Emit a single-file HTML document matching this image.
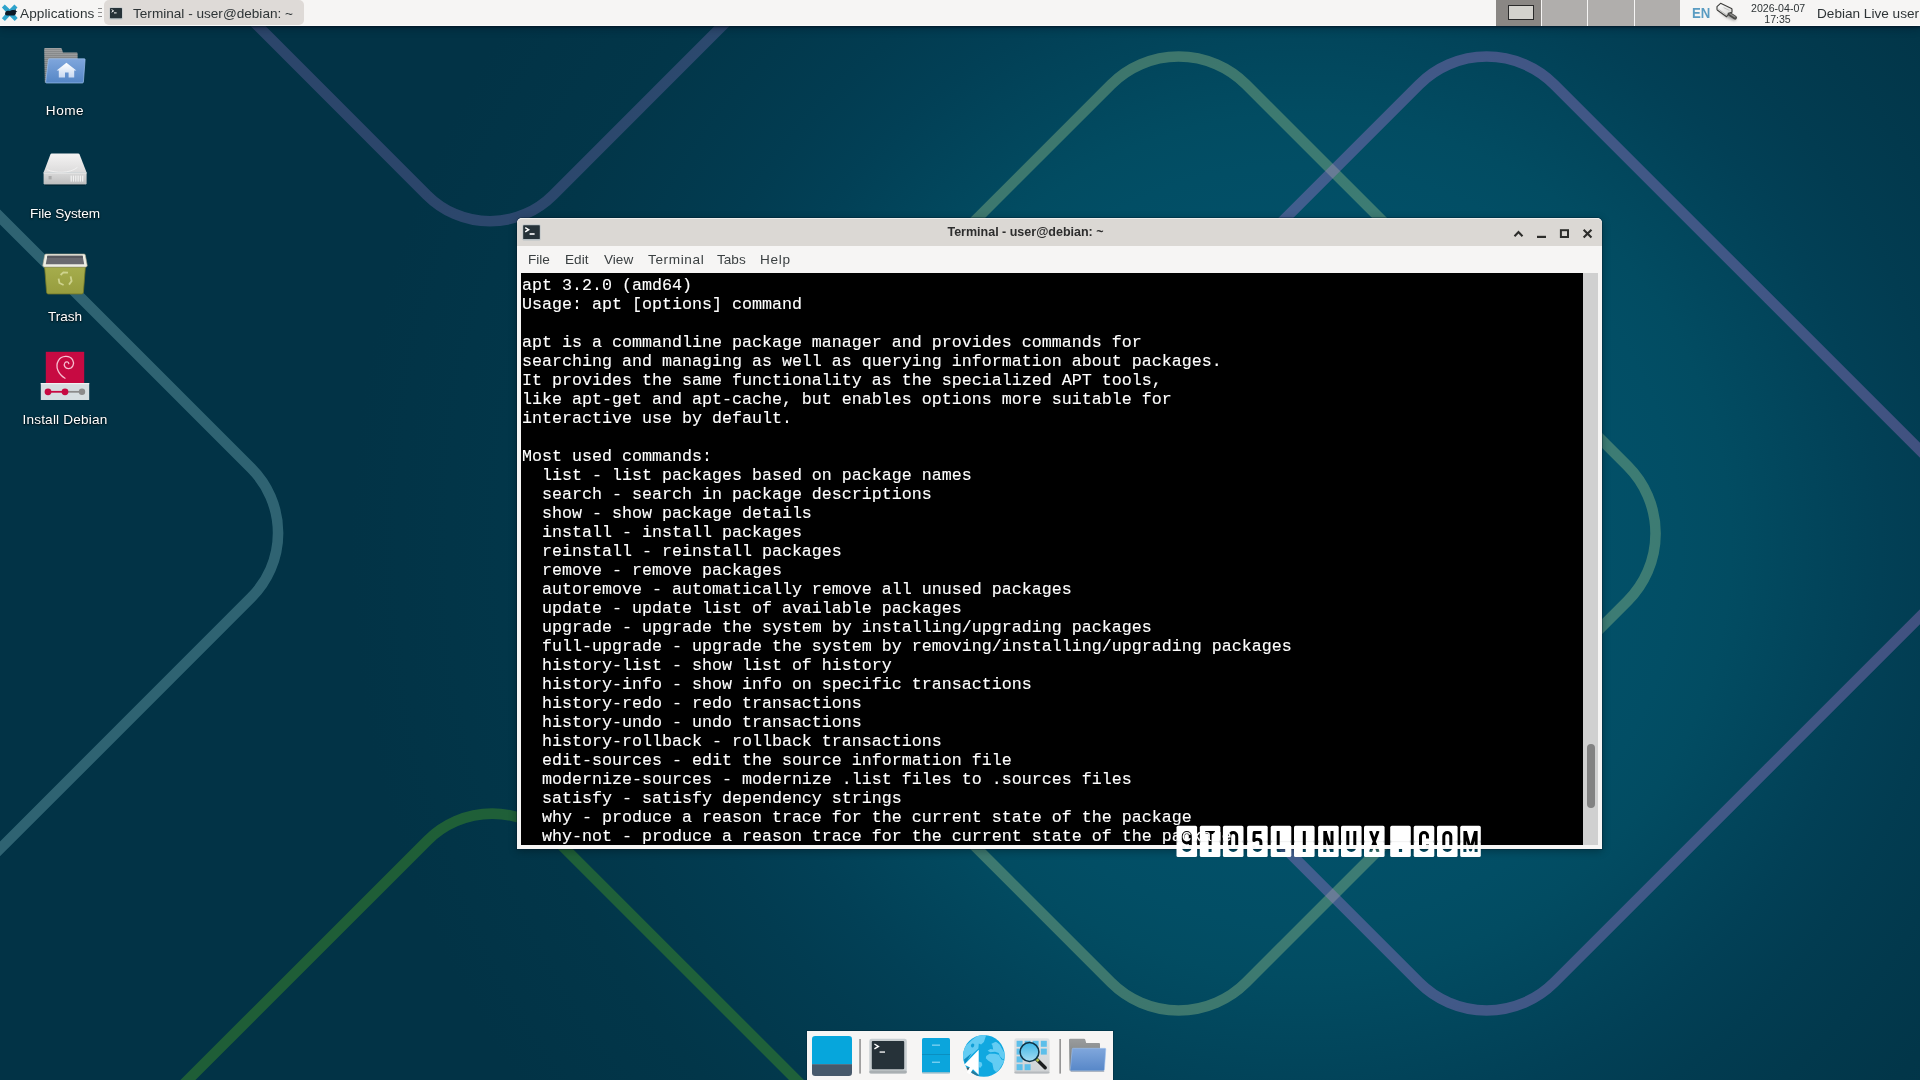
<!DOCTYPE html>
<html>
<head>
<meta charset="utf-8">
<title>Debian Live - Xfce</title>
<style>
*{box-sizing:border-box;margin:0;padding:0}
html,body{width:1920px;height:1080px;overflow:hidden}
body{position:relative;font-family:"Liberation Sans",sans-serif;background-color:#023346;
background-image:radial-gradient(circle 950px at 1300px 545px, rgb(2,82,106) 0.0%, rgb(2,80,104) 31.6%, rgb(2,78,101) 40.0%, rgb(2,76,98) 45.3%, rgb(2,72,94) 50.5%, rgb(2,68,90) 55.8%, rgb(2,64,86) 61.1%, rgb(2,60,81) 68.4%, rgb(2,57,77) 75.8%, rgb(2,54,73) 84.2%, rgb(2,51,70) 100.0%);
background-repeat:no-repeat;
}
#wall{position:absolute;left:0;top:0;width:1920px;height:1080px}
.abs{position:absolute}
#panel,.dlabel,#win,#dock,#wm{will-change:transform}

/* top panel */
#panel{position:absolute;left:0;top:0;width:1920px;height:26px;background:#f6f5f4;color:#2e3436;font-size:13.6px;border-bottom:1px solid #fbfbfb;box-shadow:0 1px 2px rgba(0,12,28,.65),0 2px 8px rgba(0,12,28,.4)}
#panel .t{position:absolute;white-space:nowrap;line-height:26px;top:.5px}
#taskbtn{position:absolute;left:104px;top:0;width:199.5px;height:25px;background:#dedad7;border-radius:5px}
.ws{position:absolute;top:0;height:26px;background:#b0aeac}

/* desktop icons */
.dlabel{position:absolute;width:160px;text-align:center;color:#fff;font-size:13.6px;line-height:16px;white-space:nowrap;text-shadow:0 1px 2px rgba(0,0,0,.8),0 0 2px rgba(0,0,0,.6)}

/* window */
#win{position:absolute;left:517px;top:218px;width:1085px;height:631px;background:#f6f5f4;border-radius:5px 5px 0 0;box-shadow:0 0 0 1px rgba(0,20,35,.3),0 2px 9px rgba(0,0,0,.32)}
#title{position:absolute;left:0;top:0;width:1085px;height:28px;background:#dbd8d4;border-radius:5px 5px 0 0;border-top:1px solid #efeeec}
#title .tt{position:absolute;left:358.5px;width:300px;top:0;text-align:center;font-weight:bold;font-size:12.5px;line-height:27px;color:#2d2d2d;white-space:nowrap}
#menu{position:absolute;left:0;top:28px;width:1085px;height:27px;background:#f6f5f4;color:#3a3f41;font-size:13.6px}
#menu span{position:absolute;top:0;line-height:27px;white-space:nowrap}
#term{position:absolute;left:4px;top:55px;width:1062px;height:572px;background:#000;overflow:hidden}
#term pre{position:absolute;left:1px;top:3px;font-family:"Liberation Mono",monospace;font-size:16.66px;line-height:19px;color:#fff;white-space:pre;-webkit-text-stroke:.12px #fff}
#sb{position:absolute;left:1066px;top:55px;width:15px;height:572px;background:#d0d0d0}
#thumb{position:absolute;left:1070px;top:526px;width:8px;height:64px;background:#828282;border-radius:4px}

/* dock */
#dock{position:absolute;left:807px;top:1031px;width:306px;height:49px;background:#f6f5f4;box-shadow:0 0 0 1px rgba(0,20,35,.25)}
</style>
</head>
<body>
<svg id="wall" viewBox="0 0 1920 1080">
 <g fill="none" stroke-width="10.6">
  <rect x="-365.2" y="-365.2" width="730.4" height="730.4" rx="91.5" transform="translate(-200.5,532.9) rotate(45)" stroke="rgba(152,211,218,.3)"/>
  <rect x="-365.2" y="-365.2" width="730.4" height="730.4" rx="89" transform="translate(490,-258.4) rotate(45)" stroke="rgba(170,128,218,.25)"/>
  <rect x="-365.2" y="-365.2" width="730.4" height="730.4" rx="91.5" transform="translate(492.2,1292.2) rotate(45)" stroke="rgba(60,137,39,.5)"/>
  <rect x="-365.2" y="-365.2" width="730.4" height="730.4" rx="95.4" transform="translate(1178.6,533.5) rotate(45)" stroke="rgba(183,215,144,.33)"/>
  <rect x="-365.2" y="-365.2" width="730.4" height="730.4" rx="95.4" transform="translate(1486.7,533.5) rotate(45)" stroke="rgba(195,124,223,.33)"/>
 </g>
</svg>

<div id="panel">
 <div id="taskbtn"></div>
 <svg class="abs" style="left:1px;top:4px" width="18" height="18" viewBox="0 0 18 18">
  <path d="M0.9 3.4 L3.8 0.6 L8.7 5.2 L13.4 0.6 L16.5 3.5 L11.8 8.6 L16.7 14 L13.7 17.1 L8.7 12.1 L3.9 17.1 L0.9 14.2 L5.7 8.7 Z" fill="#2ea3cc"/>
  <path d="M4.4 8.2 C5.2 6.9 7.2 6.6 8.8 6.9 C10.2 5.9 12.2 5.7 13.3 6.3 L14.6 5.3 L14.9 6.9 L16.3 7.6 L14.8 8.6 C15.2 9.8 14.6 11 13.2 11.4 L6.2 11.6 C4.6 11.5 3.4 10.2 4.4 8.2 Z" fill="#0c1826"/>
 </svg>
 <span class="t" style="left:20px;letter-spacing:.1px">Applications</span>
 <div class="abs" style="left:98px;top:8px;width:4px;height:1px;background:#8d8d8d;box-shadow:0 4px 0 #8d8d8d,0 8px 0 #8d8d8d"></div>
 <svg class="abs" style="left:109px;top:7px" width="14" height="13" viewBox="0 0 14 13">
  <rect x="0.5" y="0.5" width="13" height="12" rx="1" fill="#b9c2c6"/>
  <rect x="1" y="1" width="12" height="10.2" rx=".6" fill="#263238"/>
  <path d="M2.6 2.6 L4.6 3.9 L2.6 5.2" stroke="#fff" stroke-width="1" fill="none"/><rect x="5" y="5.4" width="2.6" height="1" fill="#fff"/>
 </svg>
 <span class="t" style="left:133px">Terminal - user@debian: ~</span>
 <div class="ws" style="left:1496px;width:45px;background:#8a8784"><div class="abs" style="left:12px;top:5px;width:26px;height:15px;background:#d3d2cd;border:1.5px solid #2a2a2a"></div></div>
 <div class="ws" style="left:1542px;width:45px"></div>
 <div class="ws" style="left:1588px;width:45.5px"></div>
 <div class="ws" style="left:1634.5px;width:45.5px"></div>
 <span class="t" style="left:1692px;top:-.5px;font-weight:bold;font-size:14px;color:#5a9cc2;transform:scaleX(.94);transform-origin:0 0">EN</span>
 <svg class="abs" style="left:1710px;top:0" width="35" height="26" viewBox="0 0 35 26">
  <defs><filter id="nb" x="-30%" y="-30%" width="160%" height="160%"><feGaussianBlur stdDeviation="1.4"/></filter>
  <linearGradient id="ng" x1="0" y1="0" x2="1" y2="1"><stop offset="0" stop-color="#ffffff"/><stop offset="1" stop-color="#d4d4d2"/></linearGradient></defs>
  <path d="M8 10 L16 17 L25 21 L26 18 L18 13 Z" fill="rgba(0,0,0,.38)" filter="url(#nb)"/>
  <path d="M18.6 13.4 L25 17.6" stroke="#4a4a48" stroke-width="4" stroke-linecap="round"/>
  <path d="M19.4 13.4 L25 17" stroke="#8c8c8a" stroke-width="1.3" stroke-linecap="round"/>
  <path d="M10.6 3.3 L21.5 8.5 Q22 8.8 22 9.4 L22 12.2 L18.3 13.4 L16.6 16.7 L7.5 10.2 Q7 9.8 7 9.2 L7 6.6 Z" fill="url(#ng)" stroke="#3e3e3c" stroke-width="1.15" stroke-linejoin="round"/>
  <path d="M8.2 9 L16.8 15.2 L18 12.6" fill="none" stroke="#b4b4b2" stroke-width=".9"/>
  <path d="M13.6 7.6 L19.4 10.4" stroke="#bdbdbb" stroke-width=".8"/>
 </svg>
 <span class="t" style="left:1751px;font-size:10.6px;line-height:11px;top:3px;width:53px;text-align:center">2026-04-07<br>17:35</span>
 <span class="t" style="left:1817px">Debian Live user</span>
</div>

<!-- desktop icons -->
<svg class="abs" style="left:41px;top:44px" width="48" height="44" viewBox="0 0 48 44">
 <defs>
  <linearGradient id="hfb" x1="0" y1="0" x2="0" y2="1"><stop offset="0" stop-color="#8c8e8f"/><stop offset="1" stop-color="#6f7475"/></linearGradient>
  <linearGradient id="hff" x1="0" y1="0" x2="0" y2="1"><stop offset="0" stop-color="#7fa6dc"/><stop offset="1" stop-color="#5586c6"/></linearGradient>
  <linearGradient id="hhs" x1="0" y1="0" x2="0" y2="1"><stop offset="0" stop-color="#ffffff"/><stop offset="1" stop-color="#c9d9f1"/></linearGradient>
  <pattern id="hstripe" width="4" height="2" patternUnits="userSpaceOnUse"><rect width="4" height="1" fill="rgba(255,255,255,.16)"/></pattern>
 </defs>
 <path d="M3.2 5 Q3.2 4 4.2 4 L19.6 4 Q20.6 4 20.9 5 L21.9 8.6 L35.6 8.6 Q36.6 8.6 36.6 9.6 L36.6 16 L5 38.6 L3.8 38.6 Z" fill="url(#hfb)"/>
 <path d="M3.2 5 Q3.2 4 4.2 4 L19.6 4 Q20.6 4 20.9 5 L21.9 8.6 L35.6 8.6 Q36.6 8.6 36.6 9.6 L36.6 16 L5 38.6 L3.8 38.6 Z" fill="url(#hstripe)"/>
 <path d="M8.4 14.8 L43.4 14.8 Q44.2 14.8 44.1 15.6 L42.4 38 Q42.3 39 41.3 39 L5.6 39 Q4.6 39 4.7 38 L7.4 15.7 Q7.5 14.8 8.4 14.8 Z" fill="url(#hff)" stroke="#9cc0ee" stroke-width=".7"/>
 <path d="M15.6 26.4 L25.4 18.8 L35.4 26.4 L33.2 26.4 L33.2 33.6 L27.6 33.6 L27.6 28.4 L24 28.4 L24 33.6 L17.8 33.6 L17.8 26.4 Z" fill="url(#hhs)"/>
</svg>

<svg class="abs" style="left:41px;top:148px" width="48" height="44" viewBox="0 0 48 44">
 <defs>
  <linearGradient id="dtop" x1="0" y1="0" x2="0" y2="1"><stop offset="0" stop-color="#f4f3f3"/><stop offset="1" stop-color="#dcdbdb"/></linearGradient>
  <linearGradient id="dfr" x1="0" y1="0" x2="0" y2="1"><stop offset="0" stop-color="#d9d9d9"/><stop offset="1" stop-color="#bdbdbd"/></linearGradient>
 </defs>
 <path d="M10.6 5.6 L37.2 5.6 Q38.2 5.6 38.6 6.5 L45.6 24.6 L2.6 24.6 L9.4 6.5 Q9.8 5.6 10.6 5.6 Z" fill="url(#dtop)"/>
 <path d="M6 21.6 C14 25.4 29 25.6 36.4 19.4" stroke="#f8f8f8" stroke-width=".9" fill="none" opacity=".8"/>
 <path d="M2.6 24.6 L45.6 24.6 L45.6 35.2 Q45.6 36.6 44.2 36.6 L4 36.6 Q2.6 36.6 2.6 35.2 Z" fill="url(#dfr)"/>
 <rect x="2.6" y="24.4" width="43" height="1" fill="#efefef"/>
 <rect x="7.6" y="28" width="3" height="3.4" fill="#a9a9a9"/>
 <g fill="#f2f2f2"><rect x="29.6" y="27.6" width="1.2" height="6"/><rect x="31.9" y="27.6" width="1.2" height="6"/><rect x="34.2" y="27.6" width="1.2" height="6"/><rect x="36.5" y="27.6" width="1.2" height="6"/><rect x="38.8" y="27.6" width="1.2" height="6"/><rect x="41.1" y="27.6" width="1.2" height="6"/></g>
 <rect x="4" y="36.6" width="40" height="1" fill="rgba(0,0,0,.35)"/>
</svg>

<svg class="abs" style="left:41px;top:250px" width="48" height="46" viewBox="0 0 48 46">
 <defs>
  <linearGradient id="tb" x1="0" y1="0" x2="0" y2="1"><stop offset="0" stop-color="#a6ad4c"/><stop offset="1" stop-color="#969c3e"/></linearGradient>
 </defs>
 <path d="M3.6 17 L44.4 17 L42.4 42.4 Q42.3 44 40.6 44 L7.4 44 Q5.8 44 5.6 42.4 Z" fill="url(#tb)" stroke="#6f7526" stroke-width=".8"/>
 <path d="M5 4 L43 4 Q44 4 44.3 4.9 L46.2 15.2 Q46.4 17 44.8 17 L3.2 17 Q1.6 17 1.8 15.2 L3.7 4.9 Q4 4 5 4 Z" fill="#eeeee4" stroke="#a9a58e" stroke-width=".6"/>
 <path d="M6.4 5.8 L41.6 5.8 L43.2 14.2 L4.8 14.2 Z" fill="#6a6a70"/>
 <path d="M6.4 5.8 L41.6 5.8 L42 8 L6 8 Z" fill="#58585e"/>
 <g fill="none" stroke="#d7db9a" stroke-width="1.8" opacity=".85">
  <path d="M19.6 25 L22.4 22.4 L27 22.6"/><path d="M29.6 26.4 L30.6 31 L28 34.6"/><path d="M22.6 35 L18.4 33 L17.6 28.6"/>
 </g>
</svg>

<svg class="abs" style="left:39px;top:350px" width="52" height="52" viewBox="0 0 52 52">
 <rect x="6.8" y="1.8" width="38.4" height="31.4" fill="#c70a42"/>
 <rect x="1.8" y="33" width="48.4" height="17" fill="#d6dee1"/>
 <rect x="1.8" y="33" width="48.4" height="1.2" fill="#eef2f3"/>
 <path d="M26 28.2 C19.4 24.6 15.8 16.6 19.4 10.6 C22.4 5.4 30.6 5 33.6 9.8 C36 13.8 33.4 18.6 29.4 18.6 C26.2 18.6 24.2 15.4 25.8 13 C27 11.2 29.6 11.6 29.8 13.6" fill="none" stroke="#f7bfd0" stroke-width="1.3" stroke-linecap="round"/>
 <path d="M9 41.8 L26 41.8" stroke="#c70a42" stroke-width="1.8"/><path d="M26 41.8 L43 41.8" stroke="#8b8b8b" stroke-width="1.8"/>
 <circle cx="9" cy="41.8" r="3.4" fill="#c70a42"/><circle cx="26" cy="41.8" r="3.4" fill="#c70a42"/><circle cx="43" cy="41.8" r="3.2" fill="#8b8b8b"/>
</svg>

<div class="dlabel" style="left:-15px;top:103px;letter-spacing:.5px">Home</div>
<div class="dlabel" style="left:-15px;top:206px;letter-spacing:-.1px">File System</div>
<div class="dlabel" style="left:-15px;top:309px">Trash</div>
<div class="dlabel" style="left:-15px;top:412px;letter-spacing:.2px">Install Debian</div>

<div id="win">
 <div id="title">
  <svg class="abs" style="left:5px;top:5px" width="19" height="17" viewBox="0 0 19 17">
   <rect x="0.5" y="0.5" width="18" height="16" rx="1.2" fill="#b7c0c4"/>
   <rect x="1.2" y="1.2" width="16.6" height="13.8" rx=".6" fill="#263238"/>
   <path d="M3.2 3.6 L6.6 5.7 L3.2 7.8" stroke="#fff" stroke-width="1.5" fill="none"/><rect x="7.6" y="9.2" width="5" height="1.6" fill="#fff"/>
  </svg>
  <div class="tt">Terminal - user@debian: ~</div>
  <svg class="abs" style="left:990px;top:6px" width="90" height="16" viewBox="0 0 90 16" fill="none" stroke="#2d2d2b" stroke-width="2.1">
   <path d="M7.5 11.2 L11.5 7.1 L15.5 11.2"/>
   <path d="M30 11.9 L39 11.9" stroke-width="2.2"/>
   <rect x="53.9" y="5.2" width="7.1" height="6.8" stroke-width="2"/>
   <path d="M76.65 4.7 L84.45 12.5 M84.45 4.7 L76.65 12.5"/>
  </svg>
 </div>
 <div id="menu">
  <span style="left:11px">File</span><span style="left:48px">Edit</span><span style="left:87px">View</span><span style="left:131px;letter-spacing:.62px">Terminal</span><span style="left:200px">Tabs</span><span style="left:243px;letter-spacing:.7px">Help</span>
 </div>
 <div id="term"><pre>apt 3.2.0 (amd64)
Usage: apt [options] command

apt is a commandline package manager and provides commands for
searching and managing as well as querying information about packages.
It provides the same functionality as the specialized APT tools,
like apt-get and apt-cache, but enables options more suitable for
interactive use by default.

Most used commands:
  list - list packages based on package names
  search - search in package descriptions
  show - show package details
  install - install packages
  reinstall - reinstall packages
  remove - remove packages
  autoremove - automatically remove all unused packages
  update - update list of available packages
  upgrade - upgrade the system by installing/upgrading packages
  full-upgrade - upgrade the system by removing/installing/upgrading packages
  history-list - show list of history
  history-info - show info on specific transactions
  history-redo - redo transactions
  history-undo - undo transactions
  history-rollback - rollback transactions
  edit-sources - edit the source information file
  modernize-sources - modernize .list files to .sources files
  satisfy - satisfy dependency strings
  why - produce a reason trace for the current state of the package
  why-not - produce a reason trace for the current state of the package</pre></div>
 <div id="sb"></div><div id="thumb"></div>
</div>

<div id="dock">
<svg class="abs" style="left:0;top:0" width="306" height="49" viewBox="0 0 306 49">
 <defs>
  <clipPath id="sdc"><rect x="5" y="5" width="40" height="40" rx="3.2"/></clipPath>
  <clipPath id="glc"><circle cx="176.9" cy="24.9" r="20.9"/></clipPath>
  <linearGradient id="ffr" x1="0" y1="0" x2="0" y2="1"><stop offset="0" stop-color="#80a7dc"/><stop offset="1" stop-color="#5787c8"/></linearGradient>
  <linearGradient id="fbk" x1="0" y1="0" x2="0" y2="1"><stop offset="0" stop-color="#9a9c9d"/><stop offset="1" stop-color="#6f7576"/></linearGradient>
  <linearGradient id="lens" x1="0" y1="0" x2="0" y2="1"><stop offset="0" stop-color="#3db6e6"/><stop offset="1" stop-color="#a5dcf3"/></linearGradient>
  <linearGradient id="fnd" x1="0" y1="0" x2="0" y2="1"><stop offset="0" stop-color="#e0e3e5"/><stop offset="1" stop-color="#cfd2d4"/></linearGradient>
 </defs>
 <!-- show desktop -->
 <g clip-path="url(#sdc)"><rect x="5" y="5" width="40" height="28.4" fill="#06a6dc"/><rect x="5" y="33.2" width="40" height="12" fill="#47596b"/></g>
 <!-- separator -->
 <rect x="52.3" y="8" width="1.5" height="34.6" fill="#8c8c8c"/>
 <!-- terminal -->
 <rect x="62.3" y="7.8" width="37.5" height="34.7" rx="2.2" fill="#c8ced1"/>
 <rect x="62.3" y="39.4" width="37.5" height="3.1" rx="1.6" fill="#a9afb2"/>
 <rect x="64.8" y="10" width="32.4" height="28.3" rx="1" fill="#263239"/>
 <path d="M67.4 13 L71.4 15.4 L67.4 17.8" fill="none" stroke="#fff" stroke-width="1.4"/><rect x="72.6" y="20.4" width="5.4" height="1.3" fill="#fff"/>
 <!-- file cabinet -->
 <rect x="115" y="7" width="28" height="35.3" rx="1.6" fill="#0ba5dc"/>
 <rect x="115" y="41.2" width="28" height="1.4" rx=".7" fill="#b9c3c8"/>
 <rect x="115" y="23" width="28" height="1" fill="#0b8fc0"/>
 <rect x="125" y="13.5" width="8" height="1.3" fill="#7fd3f2"/><rect x="125" y="30.6" width="8" height="1.3" fill="#7fd3f2"/>
 <!-- globe -->
 <circle cx="176.9" cy="24.9" r="20.9" fill="#10a8e0"/>
 <g clip-path="url(#glc)">
  <g fill="#63ccf3">
   <path d="M154 23.5 L159.3 14.3 L165.8 8.3 L173.2 3 L179.4 3.6 L176.9 11 L174.1 13.4 L171.8 12.4 L171.4 17.5 L164.9 23.5 L161.6 27.7 L155 30 Z"/>
   <path d="M180.6 19.8 L183.4 18 L186.2 18.4 L185.3 13.8 L189.4 11 L192.7 13.4 L195.4 18.4 L199 24.9 L196 28.6 L192.7 24.9 L191.7 22.1 L188 20.8 L183.4 21.2 Z"/>
   <path d="M179.2 24.9 L182.5 22.8 L188 22.8 L191.7 23.7 L194.5 28.6 L197.4 29.6 L195.4 33.3 L191.7 39.3 L189 41.1 L186.6 38.4 L185.3 32.3 L181.1 29.6 L178.8 27.2 Z"/>
   <path d="M171.8 30.5 L174.6 31.4 L175.3 34.2 L173.2 37 L171.8 36 Z"/>
   <path d="M184.8 13.4 L189 11.6" stroke="#63ccf3" stroke-width="1.6" fill="none"/>
  </g>
  <ellipse cx="165.6" cy="14.4" rx="1.6" ry="2" fill="#129fd6" transform="rotate(30 165.6 14.4)"/>
  <path d="M157 28.4 L164.6 22.2 L158.4 32.6 Z" fill="#0e8cc0"/>
  <path d="M164.6 39 L171.6 44 L171.6 47 L164 44 Z" fill="#2b7896"/>
 </g>
 <path d="M171.7 18.7 L171.7 43.8 L166 38.2 L162.6 43.2 L159.8 41.4 L162.8 36.2 L157.2 33.8 Z" fill="#fff"/>
 <path d="M159.4 36.8 L162.4 36.6 L160.8 39.4 Z" fill="#4d5558"/>
 <!-- app finder -->
 <rect x="207.3" y="7.3" width="35.3" height="35.2" rx="2.4" fill="url(#fnd)"/>
 <rect x="207.3" y="40.6" width="35.3" height="1.9" rx="1" fill="#b6babd"/>
 <g fill="#5dbfea"><rect x="209.6" y="9.8" width="6" height="6"/><rect x="217.6" y="9.8" width="6" height="6"/><rect x="225.6" y="9.8" width="6" height="6"/><rect x="233.8" y="9.8" width="6" height="6"/>
  <rect x="209.6" y="17.6" width="6" height="6"/><rect x="233.8" y="17.6" width="6" height="6"/><rect x="209.6" y="25.4" width="6" height="6"/>
  <rect x="209.6" y="33.2" width="6" height="6"/><rect x="217.6" y="33.2" width="6" height="6"/></g>
 <path d="M229.6 28.2 L238.2 36.8" stroke="#1a1d1f" stroke-width="3.4" stroke-linecap="round"/>
 <path d="M229.2 27.8 L231.6 30.2" stroke="#b9c44e" stroke-width="2.6"/>
 <circle cx="222.5" cy="21" r="9.4" fill="url(#lens)" stroke="#0f3346" stroke-width="1.5"/>
 <!-- separator -->
 <rect x="252.4" y="8" width="1.5" height="34.6" fill="#8c8c8c"/>
 <!-- folder -->
 <path d="M262 9 Q262 7.8 263.2 7.8 L277 7.8 Q278 7.8 278.3 8.8 L279.2 12 L292 12 Q293 12 293 13 L293 20 L264 39.6 L262.6 39.6 Z" fill="url(#fbk)"/>
 <path d="M266.2 17.3 L298 17.3 Q298.9 17.3 298.8 18.2 L297.4 38.6 Q297.3 39.7 296.2 39.7 L264.2 39.7 Q263.2 39.7 263.3 38.6 L265.2 18.2 Q265.3 17.3 266.2 17.3 Z" fill="url(#ffr)" stroke="#9dc1ef" stroke-width=".6"/>
 <rect x="263.6" y="39.7" width="33.6" height="1" fill="rgba(60,80,110,.5)"/>
</svg>
</div>

<div id="wm" style="position:absolute;left:1170px;top:820px;width:320px;height:44px">
<svg width="320" height="44" viewBox="0 0 320 44">
 <defs>
  <clipPath id="wmc"><rect x="0" y="11.0" width="320" height="21"/></clipPath>
  <mask id="wmm" maskUnits="userSpaceOnUse" x="0" y="0" width="320" height="44">
   <rect x="0" y="0" width="320" height="44" fill="#fff"/>
   <g clip-path="url(#wmc)" fill="none" stroke="#000" stroke-width="3" stroke-linejoin="round">
        <path transform="translate(16.80,11.0)" d="M3.5 8.4 A3.5 3.5 0 0 1 -3.5 8.4 L-3.5 5 A3.5 3.5 0 0 1 3.5 5 L3.5 16 A3.5 3.5 0 0 1 -3.5 16 L-3.5 14.6"/>
    <path transform="translate(40.10,11.0)" d="M-4.8 1.5 L4.8 1.5 M0 1.5 L0 21"/>
    <path transform="translate(63.20,11.0)" d="M-3.5 5 A3.5 3.5 0 0 1 3.5 5 L3.5 16 A3.5 3.5 0 0 1 -3.5 16 Z"/>
    <path transform="translate(87.40,11.0)" d="M4 1.5 L-3.2 1.5 L-3.5 9.6 Q-1.6 8 0.4 8.2 A3.3 3.4 0 0 1 3.5 11.6 L3.5 16 A3.5 3.5 0 0 1 -3.5 16 L-3.5 14.6"/>
    <path transform="translate(111.00,11.0)" d="M-2.8 0 L-2.8 19.5 L4.2 19.5"/>
    <path transform="translate(134.30,11.0)" d="M0 0 L0 21"/>
    <path transform="translate(158.40,11.0)" d="M-3.6 21 L-3.6 0 M3.6 21 L3.6 0 M-3.2 0.5 L3.2 20.5"/>
    <path transform="translate(181.30,11.0)" d="M-3.5 0 L-3.5 16 A3.5 3.5 0 0 0 3.5 16 L3.5 0"/>
    <path transform="translate(204.30,11.0)" d="M-3.8 0 L3.8 21 M3.8 0 L-3.8 21"/>
    <rect x="228.90" y="28.8" width="3.2" height="3.2" fill="#000" stroke="none"/>
    <path transform="translate(254.00,11.0)" d="M3.5 7.4 L3.5 5 A3.5 3.5 0 0 0 -3.5 5 L-3.5 16 A3.5 3.5 0 0 0 3.5 16 L3.5 13.6"/>
    <path transform="translate(277.30,11.0)" d="M-3.5 5 A3.5 3.5 0 0 1 3.5 5 L3.5 16 A3.5 3.5 0 0 1 -3.5 16 Z"/>
    <path transform="translate(300.50,11.0)" d="M-5.6 21 L-5.6 0 M5.6 21 L5.6 0 M-5 0.5 L0 19 L5 0.5"/>
   </g>
  </mask>
 </defs>
 <g mask="url(#wmm)">
  <g fill="#fff">
      <rect x="6.5" y="5.8" width="20.6" height="31.2" rx="1.6"/>
   <rect x="29.8" y="5.8" width="20.6" height="31.2" rx="1.6"/>
   <rect x="52.9" y="5.8" width="20.6" height="31.2" rx="1.6"/>
   <rect x="77.1" y="5.8" width="20.6" height="31.2" rx="1.6"/>
   <rect x="100.7" y="5.8" width="20.6" height="31.2" rx="1.6"/>
   <rect x="124.0" y="5.8" width="20.6" height="31.2" rx="1.6"/>
   <rect x="148.1" y="5.8" width="20.6" height="31.2" rx="1.6"/>
   <rect x="171.0" y="5.8" width="20.6" height="31.2" rx="1.6"/>
   <rect x="194.0" y="5.8" width="20.6" height="31.2" rx="1.6"/>
   <rect x="220.2" y="5.8" width="20.6" height="31.2" rx="1.6"/>
   <rect x="243.7" y="5.8" width="20.6" height="31.2" rx="1.6"/>
   <rect x="267.0" y="5.8" width="20.6" height="31.2" rx="1.6"/>
   <rect x="290.2" y="5.8" width="20.6" height="31.2" rx="1.6"/>
  </g>
    <rect x="6.5" y="21.2" width="20.6" height="0.9" fill="rgba(120,130,135,.12)"/>
  <rect x="6.1" y="20.4" width="1.4" height="2.4" fill="rgba(90,100,105,.3)"/><rect x="26.1" y="20.4" width="1.4" height="2.4" fill="rgba(90,100,105,.3)"/>
  <rect x="29.8" y="21.2" width="20.6" height="0.9" fill="rgba(120,130,135,.12)"/>
  <rect x="29.4" y="20.4" width="1.4" height="2.4" fill="rgba(90,100,105,.3)"/><rect x="49.4" y="20.4" width="1.4" height="2.4" fill="rgba(90,100,105,.3)"/>
  <rect x="52.9" y="21.2" width="20.6" height="0.9" fill="rgba(120,130,135,.12)"/>
  <rect x="52.5" y="20.4" width="1.4" height="2.4" fill="rgba(90,100,105,.3)"/><rect x="72.5" y="20.4" width="1.4" height="2.4" fill="rgba(90,100,105,.3)"/>
  <rect x="77.1" y="21.2" width="20.6" height="0.9" fill="rgba(120,130,135,.12)"/>
  <rect x="76.7" y="20.4" width="1.4" height="2.4" fill="rgba(90,100,105,.3)"/><rect x="96.7" y="20.4" width="1.4" height="2.4" fill="rgba(90,100,105,.3)"/>
  <rect x="100.7" y="21.2" width="20.6" height="0.9" fill="rgba(120,130,135,.12)"/>
  <rect x="100.3" y="20.4" width="1.4" height="2.4" fill="rgba(90,100,105,.3)"/><rect x="120.3" y="20.4" width="1.4" height="2.4" fill="rgba(90,100,105,.3)"/>
  <rect x="124.0" y="21.2" width="20.6" height="0.9" fill="rgba(120,130,135,.12)"/>
  <rect x="123.6" y="20.4" width="1.4" height="2.4" fill="rgba(90,100,105,.3)"/><rect x="143.6" y="20.4" width="1.4" height="2.4" fill="rgba(90,100,105,.3)"/>
  <rect x="148.1" y="21.2" width="20.6" height="0.9" fill="rgba(120,130,135,.12)"/>
  <rect x="147.7" y="20.4" width="1.4" height="2.4" fill="rgba(90,100,105,.3)"/><rect x="167.7" y="20.4" width="1.4" height="2.4" fill="rgba(90,100,105,.3)"/>
  <rect x="171.0" y="21.2" width="20.6" height="0.9" fill="rgba(120,130,135,.12)"/>
  <rect x="170.6" y="20.4" width="1.4" height="2.4" fill="rgba(90,100,105,.3)"/><rect x="190.6" y="20.4" width="1.4" height="2.4" fill="rgba(90,100,105,.3)"/>
  <rect x="194.0" y="21.2" width="20.6" height="0.9" fill="rgba(120,130,135,.12)"/>
  <rect x="193.6" y="20.4" width="1.4" height="2.4" fill="rgba(90,100,105,.3)"/><rect x="213.6" y="20.4" width="1.4" height="2.4" fill="rgba(90,100,105,.3)"/>
  <rect x="220.2" y="21.2" width="20.6" height="0.9" fill="rgba(120,130,135,.12)"/>
  <rect x="219.8" y="20.4" width="1.4" height="2.4" fill="rgba(90,100,105,.3)"/><rect x="239.8" y="20.4" width="1.4" height="2.4" fill="rgba(90,100,105,.3)"/>
  <rect x="243.7" y="21.2" width="20.6" height="0.9" fill="rgba(120,130,135,.12)"/>
  <rect x="243.3" y="20.4" width="1.4" height="2.4" fill="rgba(90,100,105,.3)"/><rect x="263.3" y="20.4" width="1.4" height="2.4" fill="rgba(90,100,105,.3)"/>
  <rect x="267.0" y="21.2" width="20.6" height="0.9" fill="rgba(120,130,135,.12)"/>
  <rect x="266.6" y="20.4" width="1.4" height="2.4" fill="rgba(90,100,105,.3)"/><rect x="286.6" y="20.4" width="1.4" height="2.4" fill="rgba(90,100,105,.3)"/>
  <rect x="290.2" y="21.2" width="20.6" height="0.9" fill="rgba(120,130,135,.12)"/>
  <rect x="289.8" y="20.4" width="1.4" height="2.4" fill="rgba(90,100,105,.3)"/><rect x="309.8" y="20.4" width="1.4" height="2.4" fill="rgba(90,100,105,.3)"/>
 </g>
</svg>
</div>
</body>
</html>
